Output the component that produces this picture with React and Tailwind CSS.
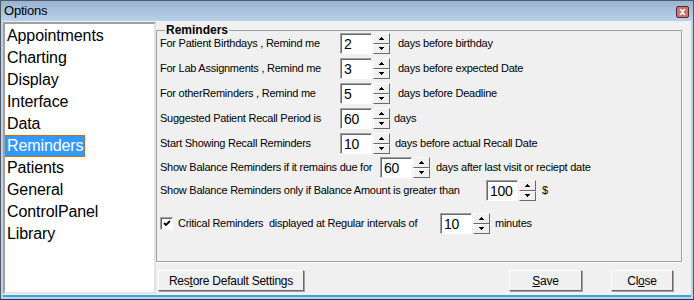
import React from 'react';

const items = ['Appointments', 'Charting', 'Display', 'Interface', 'Data', 'Reminders', 'Patients', 'General', 'ControlPanel', 'Library'];

const Arrow = ({ down }) => (
  <svg width="5" height="3" viewBox="0 0 5 3">
    {down ? <path d="M0 0h5v1H4v1H3v1H2V2H1V1H0z" fill="#000" /> : <path d="M2 0h1v1h1v1h1v1H0V2h1V1h1z" fill="#000" />}
  </svg>
);

const Spin = () => (
  <div className="flex flex-col w-[17px] h-[21px] ml-[1px] shrink-0">
    <div className="flex-1 flex items-center justify-center bg-[#f0f0f0] border border-t-white border-l-white border-r-[#696969] border-b-[#696969]">
      <Arrow />
    </div>
    <div className="flex-1 flex items-center justify-center bg-[#f0f0f0] border border-t-white border-l-white border-r-[#696969] border-b-[#696969]">
      <Arrow down />
    </div>
  </div>
);

const Num = ({ v }) => (
  <div className="w-[32px] h-[21px] shrink-0 bg-white border border-t-[#a0a0a0] border-l-[#a0a0a0] border-r-white border-b-white shadow-[inset_1px_1px_0_#696969] flex items-center pl-[3px] text-[14px] leading-none">
    {v}
  </div>
);

const Row = ({ label, lw, value, after, gap = 'ml-[6px]', className = '' }) => (
  <div className={`flex items-center h-[25px] ${className}`}>
    <span className={`${lw} shrink-0 whitespace-nowrap`}>{label}</span>
    <Num v={value} />
    <Spin />
    <span className={`${gap} whitespace-nowrap`}>{after}</span>
  </div>
);

const Btn = ({ className, children }) => (
  <button className={`h-[21px] bg-[#f0f0f0] border border-t-white border-l-white border-r-[#696969] border-b-[#696969] shadow-[1px_1px_0_#a0a0a0] text-[12px] flex items-center justify-center ${className}`}>
    {children}
  </button>
);

export default function App() {
  return (
    <div className="w-[694px] h-[300px] flex flex-col bg-[#bcd3ea] border border-[#505a66] border-b-[#1f3550] font-['Liberation_Sans',Arial,sans-serif] text-black overflow-hidden">
      {/* title bar */}
      <div className="h-[20px] shrink-0 flex items-center justify-between bg-linear-to-b from-[#99b4d1] to-[#bad1ea] pl-[3px] pr-[4px]">
        <span className="text-[13px] tracking-[-0.2px]">Options</span>
        <div className="w-[13px] h-[12px] mt-[1px] bg-[#c8766c] border border-[#5a2a26] rounded-[2px] flex items-center justify-center">
          <svg width="7" height="6" viewBox="0 0 7 6">
            <path d="M1 0l2.5 2.5L6 0M1 6l2.5-2.5L6 6" stroke="#fff" strokeWidth="1.6" fill="none" />
          </svg>
        </div>
      </div>

      {/* client */}
      <div className="flex-1 flex mx-[2px] mb-[2px] bg-[#f0f0f0] border-b-2 border-[#3ea2dc]">
        {/* list box */}
        <div className="w-[153px] h-[272px] mt-[1px] bg-white border-2 border-t-[#a0a0a0] border-l-[#a0a0a0] border-r-[#e3e3e3] border-b-[#e3e3e3] pt-[1px] text-[16px] tracking-[-0.1px]">
          {items.map((it) => (
            <div key={it} className="h-[22px] flex items-center">
              {it === 'Reminders' ? (
                <span className="ml-0 h-[22px] flex items-center px-[1px] bg-[#3399ff] text-white border border-dotted border-[#c86400]">{it}</span>
              ) : (
                <span className="ml-[2px]">{it}</span>
              )}
            </div>
          ))}
        </div>

        {/* right panel */}
        <div className="flex flex-col">
          <div className="relative w-[526px] h-[232px] mt-[9px] border border-[#a0a0a0] shadow-[1px_1px_0_#fff] pl-[3px] text-[11px] tracking-[-0.25px]">
            <span className="absolute left-[8px] top-[-8px] px-[1px] bg-[#f0f0f0] text-[12px] font-bold leading-[14px] tracking-normal">Reminders</span>
            <Row label="For Patient Birthdays , Remind me" lw="w-[180px]" value="2" after="days before birthday" gap="ml-[8px]" />
            <Row label="For Lab Assignments , Remind me" lw="w-[180px]" value="3" after="days before expected Date" gap="ml-[8px]" />
            <Row label="For otherReminders , Remind me" lw="w-[180px]" value="5" after="days before Deadline" gap="ml-[8px]" />
            <Row label="Suggested Patient Recall Period is" lw="w-[180px]" value="60" after="days" gap="ml-[4px]" />
            <Row label="Start Showing Recall Reminders" lw="w-[180px]" value="10" after="days before actual Recall Date" gap="ml-[5px]" />
            <Row label="Show Balance Reminders if it remains due for" lw="w-[220px]" value="60" after="days after last visit or reciept date" className="mt-[-1px]" />
            <Row label="Show Balance Reminders only if Balance Amount is greater than" lw="w-[326px]" value="100" after="$" className="mt-[-2px]" />
            <div className="flex items-center h-[25px] mt-[8px]">
              <div className="w-[13px] h-[13px] shrink-0 bg-white border border-t-[#a0a0a0] border-l-[#a0a0a0] border-r-white border-b-white shadow-[inset_1px_1px_0_#696969] flex items-center justify-center">
                <svg width="8" height="7" viewBox="0 0 8 7">
                  <path d="M1 3l2 2 4-4" stroke="#000" strokeWidth="1.8" fill="none" />
                </svg>
              </div>
              <span className="ml-[5px] w-[262px] shrink-0 whitespace-nowrap">Critical Reminders&nbsp; displayed at Regular intervals of</span>
              <Num v="10" />
              <Spin />
              <span className="ml-[5px]">minutes</span>
            </div>
          </div>

          <div className="flex mt-[8px] tracking-[-0.25px]">
            <Btn className="ml-[2px] w-[146px]">Res<u>t</u>ore Default Settings</Btn>
            <Btn className="ml-[205px] w-[73px]"><u>S</u>ave</Btn>
            <Btn className="ml-[29px] w-[62px]">Cl<u>o</u>se</Btn>
          </div>
        </div>
      </div>
    </div>
  );
}
